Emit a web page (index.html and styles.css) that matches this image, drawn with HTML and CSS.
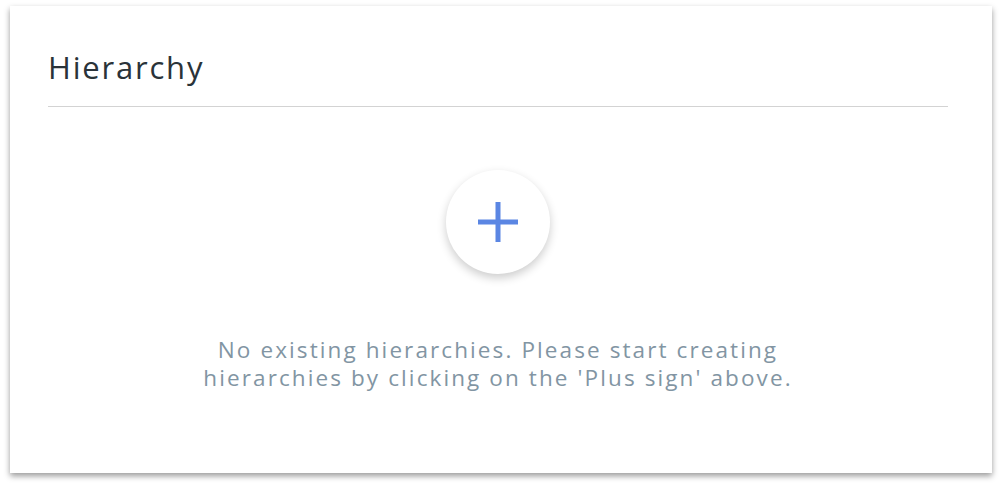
FILE: index.html
```html
<!DOCTYPE html>
<html lang="en">
<head>
    <meta charset="UTF-8">
    <meta name="viewport" content="width=device-width, initial-scale=1.0">
    <title>Hierarchy</title>
    <link rel="stylesheet" href="styles.css">
</head>
<body>
    <!-- Tarjeta de jerarquías -->
    <div class="card">
        <div class="card-header">
            <h2>Hierarchy</h2>
        </div>

        <div class="empty-state">
            <button class="add-btn" title="Add hierarchy">
                <svg width="40" height="40" viewBox="0 0 40 40">
                    <rect x="17.5" y="0" width="5" height="40" fill="#5b86e3"/>
                    <rect x="0" y="17.5" width="40" height="5" fill="#5b86e3"/>
                </svg>
            </button>
            <p>No existing hierarchies. Please start creating<br>hierarchies by clicking on the 'Plus sign' above.</p>
        </div>
    </div>
</body>
</html>
```

FILE: styles.css
```css
* {
    margin: 0;
    padding: 0;
    box-sizing: border-box;
}

html,
body {
    min-height: 100%;
}

body {
    font-family: 'Open Sans', sans-serif;
    background: #ffffff;
    padding: 6px 10px 15px 10px;
}

/* Tarjeta */
.card {
    background: white;
    height: 467px;
    padding: 0 44px 0 38px;
    box-shadow: 0 3px 6px rgba(0, 0, 0, 0.4);
}

.card-header {
    padding-top: 42px;
    border-bottom: 1px solid #d3d3d3;
    height: 101px;
}

.card-header h2 {
    font-weight: 400;
    font-size: 31px;
    line-height: 38px;
    letter-spacing: 1.8px;
    color: #2a3339;
}

/* Estado vacío */
.empty-state {
    display: flex;
    flex-direction: column;
    align-items: center;
    padding-top: 63px;
}

.add-btn {
    width: 104px;
    height: 104px;
    border-radius: 50%;
    border: none;
    background: white;
    box-shadow: 0 4px 10px rgba(0, 0, 0, 0.2);
    display: flex;
    align-items: center;
    justify-content: center;
    cursor: pointer;
}

.empty-state p {
    margin-top: 62px;
    text-align: center;
    font-size: 22.5px;
    line-height: 28px;
    letter-spacing: 2.1px;
    color: #8295a3;
}
```
